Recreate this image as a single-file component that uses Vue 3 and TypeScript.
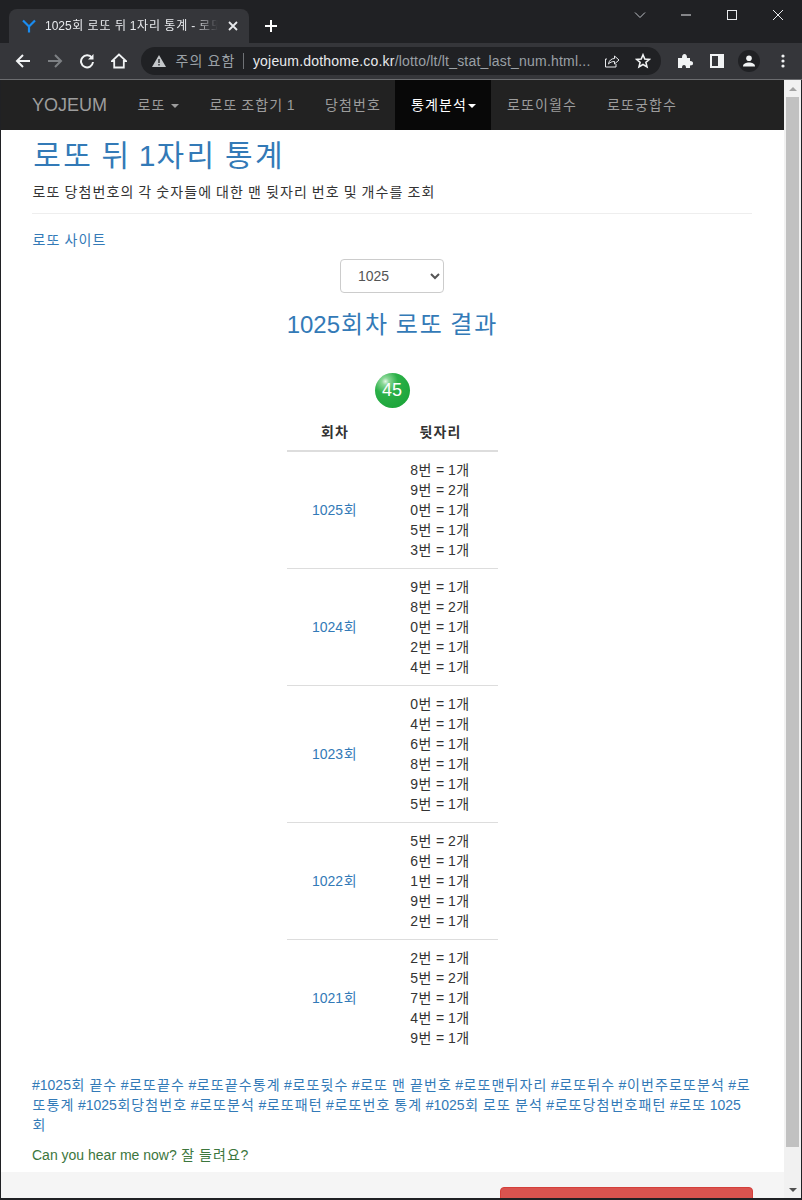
<script setup lang="ts">
import { h } from 'vue'

const Ko = (props: { t: string }) =>
  props.t
    .split(/([가-힣]+)/)
    .filter(Boolean)
    .map((s) => (/[가-힣]/.test(s) ? h('span', { class: 'ko' }, s) : s))
Ko.props = ['t']

const rounds = [
  { name: '1025회', rows: ['8번 = 1개', '9번 = 2개', '0번 = 1개', '5번 = 1개', '3번 = 1개'] },
  { name: '1024회', rows: ['9번 = 1개', '8번 = 2개', '0번 = 1개', '2번 = 1개', '4번 = 1개'] },
  { name: '1023회', rows: ['0번 = 1개', '4번 = 1개', '6번 = 1개', '8번 = 1개', '9번 = 1개', '5번 = 1개'] },
  { name: '1022회', rows: ['5번 = 2개', '6번 = 1개', '1번 = 1개', '9번 = 1개', '2번 = 1개'] },
  { name: '1021회', rows: ['2번 = 1개', '5번 = 2개', '7번 = 1개', '4번 = 1개', '9번 = 1개'] },
]
const tagsA = '#1025회 끝수 #로또끝수 #로또끝수통계 #로또뒷수 #로또 맨 끝번호 #로또맨뒤자리 #로또뒤수 #이번주로또분석 #로'
const tagsB = '또통계 #1025회당첨번호 #로또분석 #로또패턴 #로또번호 통계 #1025회 로또 분석 #로또당첨번호패턴 #로또 1025회'
</script>

<template>
  <div class="window">
    <div class="tabstrip">
      <div class="tab">
        <svg class="favicon" viewBox="0 0 14 14" width="14" height="14"><path d="M1 1.5 L7 7.5 L13 1.5 M7 7.5 V13.5" fill="none" stroke="#1a8cf0" stroke-width="2.2" /></svg>
        <span class="tab-title"><Ko t="1025회 로또 뒤 1자리 통계 - 로또" /></span>
        <svg class="tab-x" viewBox="0 0 10 10" width="10" height="10"><path d="M1 1 L9 9 M9 1 L1 9" stroke="#e8eaed" stroke-width="1.8" /></svg>
      </div>
      <svg class="newtab" viewBox="0 0 12 12" width="12" height="12"><path d="M6 0 V12 M0 6 H12" stroke="#fff" stroke-width="2" /></svg>
      <div class="spacer"></div>
      <div class="winctl">
        <svg viewBox="0 0 12 12" width="12" height="12"><path d="M1 3.5 L6 8.5 L11 3.5" fill="none" stroke="#bdc1c6" stroke-width="1" /></svg>
        <svg viewBox="0 0 12 12" width="12" height="12"><path d="M1 6 H11" stroke="#e8eaed" stroke-width="1" /></svg>
        <svg viewBox="0 0 12 12" width="12" height="12"><rect x="1.5" y="1.5" width="9" height="9" fill="none" stroke="#e8eaed" stroke-width="1" /></svg>
        <svg viewBox="0 0 12 12" width="12" height="12"><path d="M1 1 L11 11 M11 1 L1 11" stroke="#e8eaed" stroke-width="1" /></svg>
      </div>
    </div>
    <div class="toolbar">
      <svg class="tool" viewBox="0 0 16 16" width="16" height="16"><path d="M15 8 H2 M8 2 L2 8 L8 14" fill="none" stroke="#f1f3f4" stroke-width="2" /></svg>
      <svg class="tool" viewBox="0 0 16 16" width="16" height="16"><path d="M1 8 H14 M8 2 L14 8 L8 14" fill="none" stroke="#7d8084" stroke-width="2" /></svg>
      <svg class="tool" viewBox="0 0 16 16" width="16" height="16"><path d="M13 5 A6 6 0 1 0 14 9" fill="none" stroke="#f1f3f4" stroke-width="2" /><path d="M14.5 1 V6.5 H9 Z" fill="#f1f3f4" /></svg>
      <svg class="tool" viewBox="0 0 16 16" width="16" height="16"><path d="M8 1.5 L1 8 H3.2 V14.5 H12.8 V8 H15 Z" fill="none" stroke="#f1f3f4" stroke-width="1.8" /></svg>
      <div class="omnibox">
        <svg viewBox="0 0 14 14" width="14" height="14"><path d="M7 1 L14 13 H0 Z" fill="#c4c7ca" /><path d="M7 5 V9 M7 10 V11.5" stroke="#292a2d" stroke-width="1.4" /></svg>
        <span class="warn"><Ko t="주의 요함" /></span>
        <span class="sep"></span>
        <span class="url"><b>yojeum.dothome.co.kr</b>/lotto/lt/lt_stat_last_num.html...</span>
        <svg class="share" viewBox="0 0 16 16" width="16" height="16"><path d="M3 6 H1.5 V14 H12 V11" fill="none" stroke="#e8eaed" stroke-width="1" /><path d="M4.5 11 C5 7.5 7.5 5.5 10.5 5.5 V3 L15 7 L10.5 11 V8.5 C8 8.5 6 9.3 4.5 11 Z" fill="none" stroke="#e8eaed" stroke-width="1" /></svg>
        <svg class="star" viewBox="0 0 16 16" width="16" height="16"><path d="M8 1.8 L9.8 6 L14.4 6.4 L10.9 9.4 L12 13.9 L8 11.5 L4 13.9 L5.1 9.4 L1.6 6.4 L6.2 6 Z" fill="none" stroke="#f1f3f4" stroke-width="1.6" /></svg>
      </div>
      <svg class="puzzle" viewBox="0 0 16 16" width="16" height="16"><path d="M1 5 H5 C5 2 6 1 7.5 1 C9 1 10 2 10 5 H13 V8 C15.5 8 16 9 16 10.2 C16 11.5 15.5 12.5 13 12.5 V15 H9 C9 13 8.5 12 7 12 C5.5 12 5 13 5 15 H1 Z" fill="#f1f3f4" /></svg>
      <svg class="panel" viewBox="0 0 14 14" width="14" height="14"><path d="M0 0 H14 V14 H0 Z M2 2 V12 H8 V2 Z" fill="#f1f3f4" fill-rule="evenodd" /></svg>
      <div class="avatar"><svg viewBox="0 0 12 12" width="12" height="12"><circle cx="6" cy="3.2" r="2.8" fill="#f1f3f4" /><path d="M0 11.5 C0 8.5 3 7.5 6 7.5 C9 7.5 12 8.5 12 11.5 Z" fill="#f1f3f4" /></svg></div>
      <svg class="dots" viewBox="0 0 4 14" width="4" height="14"><circle cx="2" cy="2" r="1.6" fill="#f1f3f4" /><circle cx="2" cy="7" r="1.6" fill="#f1f3f4" /><circle cx="2" cy="12" r="1.6" fill="#f1f3f4" /></svg>
    </div>

    <div class="viewport">
      <div class="page">
        <nav class="navbar">
          <a class="brand">YOJEUM</a>
          <a class="nav-item"><Ko t="로또 " /><i class="caret"></i></a>
          <a class="nav-item"><Ko t="로또 조합기 1" /></a>
          <a class="nav-item"><Ko t="당첨번호" /></a>
          <a class="nav-item active"><Ko t="통계분석" /><i class="caret"></i></a>
          <a class="nav-item"><Ko t="로또이월수" /></a>
          <a class="nav-item"><Ko t="로또궁합수" /></a>
        </nav>
        <main class="container">
          <h1 class="title"><Ko t="로또 뒤 1자리 통계" /></h1>
          <p class="lead"><Ko t="로또 당첨번호의 각 숫자들에 대한 맨 뒷자리 번호 및 개수를 조회" /></p>
          <hr class="rule" />
          <a class="site-link"><Ko t="로또 사이트" /></a>
          <div class="center">
            <select class="select"><option>1025</option></select>
            <h3 class="result-title"><Ko t="1025회차 로또 결과" /></h3>
            <div class="ball">45</div>
            <table class="stats">
              <thead><tr><th class="col-a"><Ko t="회차" /></th><th><Ko t="뒷자리" /></th></tr></thead>
              <tbody>
                <tr v-for="r in rounds" :key="r.name">
                  <td class="round"><Ko :t="r.name" /></td>
                  <td><div v-for="(row, i) in r.rows" :key="i"><Ko :t="row" /></div></td>
                </tr>
              </tbody>
            </table>
          </div>
          <p class="tags"><Ko :t="tagsA" /><Ko :t="tagsB" /></p>
          <p class="hear"><Ko t="Can you hear me now? 잘 들려요?" /></p>
        </main>
        <footer class="footer">
          <span class="copy">COPYRIGHTS YOJEUM. ALL RIGHTS RESERVED.</span>
          <button class="red-btn"><Ko t="요즘 사이트 바로가기" /></button>
        </footer>
      </div>
      <div class="scrollbar">
        <div class="arrow"><i class="up"></i></div>
        <div class="track"><div class="thumb"></div></div>
        <div class="arrow"><i class="down"></i></div>
      </div>
    </div>
  </div>
</template>

<style>
html, body { margin: 0; padding: 0; background: #fff; overflow: hidden; }
.ko { letter-spacing: 0.08em; margin-left: 0.04em; margin-right: -0.04em; }
</style>

<style scoped>
.window { width: 802px; height: 1200px; overflow: hidden; display: flex; flex-direction: column; font-family: "Liberation Sans", "Noto Sans CJK KR", sans-serif; color: #333; font-size: 14px; line-height: 20px; }
.tabstrip { height: 43px; background: #202124; display: flex; align-items: flex-end; flex: none; }
.tab { width: 240px; height: 34px; margin-left: 9px; background: #35363a; border-radius: 8px 8px 0 0; display: flex; align-items: center; padding: 0 10px 0 13px; box-sizing: border-box; }
.favicon { flex: none; margin-right: 9px; }
.tab-title { color: #e8eaed; font-size: 12px; white-space: nowrap; overflow: hidden; width: 173px; flex: none; -webkit-mask-image: linear-gradient(to right, #000 150px, transparent 173px); mask-image: linear-gradient(to right, #000 150px, transparent 173px); }
.tab-x { flex: none; margin-left: 10px; }
.newtab { margin: 0 0 11px 16px; }
.spacer { flex: 1; }
.winctl { align-self: flex-start; display: flex; gap: 34px; padding: 9px 18px 0 0; }
.toolbar { height: 36px; background: #35363a; border-bottom: 1px solid #6b6c6f; display: flex; align-items: center; flex: none; padding-left: 15px; }
.tool { margin-right: 16px; flex: none; }
.omnibox { height: 28px; width: 520px; margin-left: -2px; background: #202124; border-radius: 14px; display: flex; align-items: center; padding-left: 11px; box-sizing: border-box; flex: none; }
.warn { color: #9aa0a6; font-size: 14px; margin-left: 9px; white-space: nowrap; }
.sep { width: 1px; height: 16px; background: #6f7276; margin: 0 9px 0 8px; }
.url { color: #9aa0a6; font-size: 14px; white-space: nowrap; letter-spacing: 0.2px; }
.url b { color: #e8eaed; font-weight: 400; }
.share { margin-left: 13px; flex: none; }
.star { margin-left: 15px; flex: none; }
.puzzle { margin-left: 16px; flex: none; }
.panel { margin-left: 17px; flex: none; }
.avatar { width: 22px; height: 22px; margin-left: 14px; border-radius: 50%; background: #202124; display: flex; align-items: center; justify-content: center; flex: none; }
.dots { margin-left: 21px; flex: none; }
.viewport { flex: 1; min-height: 0; display: flex; overflow: hidden; border-left: 1px solid #202124; border-right: 1px solid #202124; border-bottom: 2px solid #202124; }
.page { flex: 1; min-width: 0; overflow: hidden; background: #fff; }
.navbar { height: 50px; background: #222; display: flex; padding-left: 16px; box-sizing: border-box; }
.brand { color: #9d9d9d; font-size: 18px; line-height: 50px; padding: 0 15px; }
.nav-item { color: #9d9d9d; line-height: 50px; padding: 0 15px; font-size: 14px; white-space: nowrap; }
.nav-item.active { background: #080808; color: #fff; }
.caret { display: inline-block; width: 0; height: 0; border-top: 4px solid; border-left: 4px solid transparent; border-right: 4px solid transparent; vertical-align: middle; margin-left: 2px; }
.container { padding: 6px 32px 0 31px; height: 1042px; box-sizing: border-box; }
.title { font-size: 30px; font-weight: 400; line-height: 40px; color: #337ab7; margin: 0; }
.lead { margin: 6px 0 0; line-height: 20px; color: #333; }
.rule { border: 0; border-top: 1px solid #eee; margin: 11px 0 16px; }
.site-link { color: #337ab7; display: block; }
.center { display: flex; flex-direction: column; align-items: center; }
.select { width: 104px; height: 34px; margin-top: 9px; border: 1px solid #ccc; border-radius: 4px; background: #fff; color: #555; font: 14px "Liberation Sans", sans-serif; padding: 6px 13px; }
.result-title { font-size: 24px; font-weight: 400; line-height: 26px; color: #337ab7; margin: 19px 0 0; white-space: nowrap; }
.ball { width: 35px; height: 35px; margin-top: 35px; border-radius: 50%; color: #fff; font-size: 18px; line-height: 35px; text-align: center; background: radial-gradient(circle at 30% 24%, #e4f6e7 0, #8ad796 10%, #2bb048 34%, #16a034 100%); }
.stats { width: 211px; table-layout: fixed; border-collapse: collapse; margin-top: 6px; }
.stats th { height: 37px; padding: 8px; box-sizing: border-box; border-bottom: 2px solid #ddd; font-weight: 700; text-align: center; color: #333; }
.col-a { width: 96px; }
.stats td { padding: 8px; text-align: center; border-top: 1px solid #ddd; line-height: 20px; }
.stats tbody tr:first-child td { border-top: 0; }
.round { color: #337ab7; }
.tags { color: #337ab7; margin: 19px 0 0; line-height: 20px; word-break: break-all; }
.hear { color: #3c763d; margin: 10px 0 0; }
.footer { background: #f5f5f5; height: 100px; padding: 15px 31px 0 31px; display: flex; justify-content: space-between; align-items: flex-start; box-sizing: border-box; }
.copy { color: #333; margin-top: 7px; font-size: 14px; }
.red-btn { width: 253px; height: 40px; padding: 0 0 0 80px; background: #d9534f; border: 1px solid #d43f3a; border-radius: 4px; color: #fff; font: 14px "Liberation Sans", "Noto Sans CJK KR", sans-serif; line-height: 18px; }
.scrollbar { width: 17px; flex: none; background: #f1f1f1; display: flex; flex-direction: column; }
.arrow { height: 17px; display: flex; align-items: center; justify-content: center; flex: none; }
.up { width: 0; height: 0; border-left: 4px solid transparent; border-right: 4px solid transparent; border-bottom: 4px solid #a3a3a3; }
.down { width: 0; height: 0; border-left: 4px solid transparent; border-right: 4px solid transparent; border-top: 4px solid #505050; }
.track { flex: 1; }
.thumb { height: 1050px; margin: 0 2px; background: #c1c1c1; }
</style>
